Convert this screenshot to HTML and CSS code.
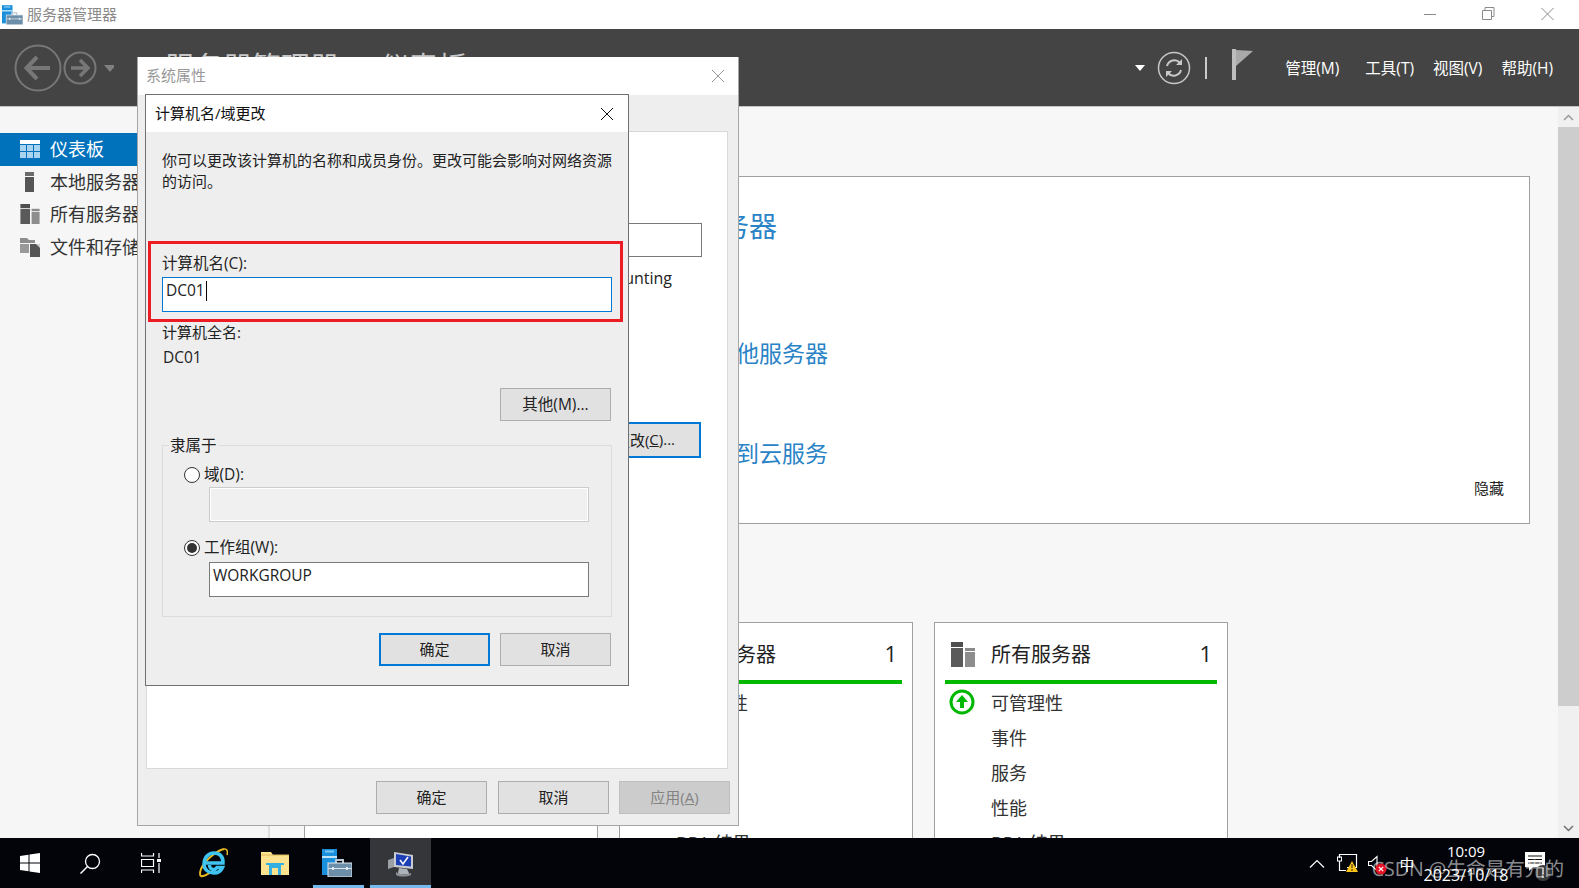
FILE: index.html
```html
<!DOCTYPE html>
<html>
	<head>
		<meta charset="utf-8">
		<title>服务器管理器</title>
		<link rel="stylesheet" href="styles.css">
	</head>
	<body>
		<svg class="defs" width="0" height="0">
			<symbol id="srvmgr" viewBox="0 0 30 28">
				<rect x="0" y="0" width="15" height="26" fill="#1a8fdc"/>
				<rect x="0" y="7" width="15" height="2" fill="#bfe3f8"/>
				<rect x="3" y="1.5" width="9" height="2" fill="#7cc8f2"/>
				<path d="M14 14v-3h7v3" fill="none" stroke="#b9c7d2" stroke-width="2"/>
				<rect x="6" y="14" width="24" height="14" fill="#6c8ea8" stroke="#dfe8ee"/>
				<path d="M6.500 19.500h23" stroke="#dfe8ee"/>
				<rect x="10" y="18" width="2" height="3" fill="#dfe8ee"/>
				<rect x="24" y="18" width="2" height="3" fill="#dfe8ee"/>
			</symbol>
			<symbol id="allsrv" viewBox="0 0 24 25">
				<rect x="0" y="0" width="12" height="5" fill="#4f4f4f"/>
				<rect x="0" y="6" width="12" height="19" fill="#5a5a5a"/>
				<rect x="14" y="6" width="10" height="3" fill="#8a8a8a"/>
				<rect x="14" y="10" width="10" height="15" fill="#8d8d8d"/>
			</symbol>
		</svg>

		<div class="app">
			<!-- 标题栏 -->
			<div class="titlebar">
				<svg class="title-icon" width="21" height="20"><use href="#srvmgr"/></svg>
				<span class="title-text">服务器管理器</span>
				<div class="winctl">
					<svg width="58" height="14" viewBox="0 0 58 14"><path d="M0 7.500h12" stroke="#8a8a8a"/></svg>
					<svg width="59" height="14" viewBox="0 0 59 14"><path d="M.5 3.500h9v9h-9zM3 3V.5h9v9H10" fill="none" stroke="#8a8a8a"/></svg>
					<svg width="13" height="14" viewBox="0 0 13 14"><path d="M.5 1l12 12M12.500 1l-12 12" stroke="#8a8a8a"/></svg>
				</div>
			</div>

			<!-- 工具栏 -->
			<div class="toolbar">
				<svg class="nav-icon" width="100" height="50" viewBox="0 0 100 50">
					<circle cx="24" cy="25" r="22.500" fill="none" stroke="#777" stroke-width="2"/>
					<path d="M36 25H14M23 14L12.500 25 23 36" fill="none" stroke="#777" stroke-width="4"/>
					<circle cx="66" cy="25" r="15.500" fill="none" stroke="#777" stroke-width="2"/>
					<path d="M57 25h16M66 17l8 8-8 8" fill="none" stroke="#777" stroke-width="3.500"/>
					<path d="M90 22h12l-6 7z" fill="#808080"/>
				</svg>
				<span class="crumb">服务器管理器 · 仪表板</span>
				<div class="tools">
					<svg class="caret-down" width="10" height="6" viewBox="0 0 10 6"><path d="M0 0h10L5 6z" fill="#fff"/></svg>
					<svg class="refresh" width="34" height="34" viewBox="0 0 34 34">
						<circle cx="17" cy="17" r="15.500" fill="none" stroke="#c8c8c8" stroke-width="1.500"/>
						<path d="M10 15a7.500 7.500 0 0 1 13-3M24 19a7.500 7.500 0 0 1-13 3" fill="none" stroke="#c8c8c8" stroke-width="2"/>
						<path d="M25 8v6h-6zM9 26v-6h6z" fill="#c8c8c8"/>
					</svg>
					<span class="sep"></span>
					<svg class="flag" width="22" height="31" viewBox="0 0 22 31">
						<path d="M0 0h4v31H0z" fill="#bdbdbd"/>
						<path d="M4 1l17 1L4 17z" fill="#a9a9a9"/>
					</svg>
					<div class="menu">
						<span class="menu-a">管理(M)</span>
						<span class="menu-b">工具(T)</span>
						<span class="menu-c">视图(V)</span>
						<span class="menu-d">帮助(H)</span>
					</div>
				</div>
			</div>

			<!-- 主体 -->
			<div class="main">
				<div class="sidebar">
					<div class="side-item active">
						<svg width="20" height="18" viewBox="0 0 20 18">
							<rect width="20" height="4" fill="#fff"/>
							<path d="M0 5h6v6H0zM7 5h6v6H7zM14 5h6v6h-6zM0 12h6v6H0zM7 12h6v6H7zM14 12h6v6h-6z" fill="#a9d3ee"/>
						</svg>
						<span>仪表板</span>
					</div>
					<div class="side-item">
						<svg width="20" height="20" viewBox="0 0 20 20">
							<rect x="5" y="0" width="9" height="4" fill="#6b6b6b"/>
							<rect x="5" y="5" width="9" height="15" fill="#555"/>
						</svg>
						<span>本地服务器</span>
					</div>
					<div class="side-item">
						<svg width="20" height="20"><use href="#allsrv"/></svg>
						<span>所有服务器</span>
					</div>
					<div class="side-item">
						<svg width="20" height="20" viewBox="0 0 20 20">
							<path d="M0 1h7l2 2h6v3H0z" fill="#8d8d8d"/>
							<path d="M0 7h9v9H0z" fill="#9a9a9a"/>
							<path d="M10 7h10v13H10z" fill="#555"/>
							<path d="M16 7h4v4z" fill="#d0d0d0"/>
						</svg>
						<span>文件和存储服务</span>
					</div>
				</div>

				<div class="content">
					<div class="panel">
						<div class="link first">配置此本地服务器</div>
						<div class="link second">添加角色和功能</div>
						<div class="link">添加要管理的其他服务器</div>
						<div class="link">创建服务器组</div>
						<div class="link">将此服务器连接到云服务</div>
						<div class="hide-link">隐藏</div>
					</div>
					<div class="cards">
						<div class="card"></div>
						<div class="card">
							<div class="card-head">
								<svg class="card-icon" width="24" height="25"><use href="#allsrv"/></svg>
								<span class="card-title">本地服务器</span>
								<span class="card-num">1</span>
							</div>
							<div class="card-bar"></div>
							<div class="card-row">可管理性</div>
							<div class="card-row">事件</div>
							<div class="card-row">服务</div>
							<div class="card-row">性能</div>
							<div class="card-row">BPA 结果</div>
						</div>
						<div class="card">
							<div class="card-head">
								<svg class="card-icon" width="24" height="25"><use href="#allsrv"/></svg>
								<span class="card-title">所有服务器</span>
								<span class="card-num">1</span>
							</div>
							<div class="card-bar"></div>
							<div class="card-row">
								<svg class="ok-icon" width="26" height="26" viewBox="0 0 26 26">
									<circle cx="13" cy="13" r="11" fill="#fff" stroke="#00b800" stroke-width="3"/>
									<path d="M13 6l6 7h-4v6h-4v-6H7z" fill="#00b800"/>
								</svg>
								可管理性
							</div>
							<div class="card-row">事件</div>
							<div class="card-row">服务</div>
							<div class="card-row">性能</div>
							<div class="card-row">BPA 结果</div>
						</div>
					</div>
				</div>

				<div class="scrollbar">
					<div class="sb-btn">
						<svg width="11" height="7" viewBox="0 0 11 7"><path d="M1 6l4.500-4.500L10 6" fill="none" stroke="#9a9a9a" stroke-width="1.500"/></svg>
					</div>
					<div class="sb-thumb"></div>
					<div class="sb-track"></div>
					<div class="sb-btn">
						<svg width="11" height="7" viewBox="0 0 11 7"><path d="M1 1l4.500 4.500L10 1" fill="none" stroke="#707070" stroke-width="1.500"/></svg>
					</div>
				</div>
			</div>

			<!-- 任务栏 -->
			<div class="taskbar">
				<div class="task-btn win">
					<svg width="20" height="20" viewBox="0 0 20 20"><path d="M0 3l8.500-1.200v7.700H0zM9.500 1.600L20 0v9.500H9.500zM0 10.500h8.500v7.700L0 17zM9.500 10.500H20V20L9.500 18.400z" fill="#fff"/></svg>
				</div>
				<div class="task-btn">
					<svg width="21" height="21" viewBox="0 0 21 21"><circle cx="12.500" cy="8.500" r="7" fill="none" stroke="#fff" stroke-width="1.300"/><path d="M7.500 13.500L.5 20.500" stroke="#fff" stroke-width="1.500"/></svg>
				</div>
				<div class="task-btn nudge">
					<svg width="20" height="20" viewBox="0 0 20 20"><path d="M.5 0v3h12V0M.5 6.500h12v7H.5zM.5 20v-3h12v3M18 0v5M18 10v10" fill="none" stroke="#fff" stroke-width="1.200"/><rect x="16" y="6" width="4" height="3" fill="#fff"/></svg>
				</div>
				<div class="task-btn nudge">
					<svg width="30" height="30" viewBox="0 0 30 30">
						<path d="M26 1C21 2 8 10 3 21c-2 5-1 8 2 7 3-.5 6-2.500 9-5" fill="none" stroke="#e8b923" stroke-width="2"/>
						<path d="M26 1c3-.5 4 2 3 6" fill="none" stroke="#e8b923" stroke-width="1.500"/>
						<path d="M7 15h18c.5-7-4-10-9-10C10 5 6 10 6 16c0 6 5 9 10 9 4 0 7-2 8.500-5.500H19c-1 1.500-2 2-3.500 2-2.500 0-4-2-4-4.500" fill="none" stroke="#3fc3f0" stroke-width="3.500"/>
					</svg>
				</div>
				<div class="task-btn nudge">
					<svg width="28" height="24" viewBox="0 0 28 24">
						<path d="M0 1h10l2 3h16v20H0z" fill="#fde28f"/>
						<path d="M0 4h28" stroke="#d9b85c"/>
						<path d="M8 12h12v12h-3v-7h-6v7H8z" fill="#35aee2"/>
						<rect x="5" y="12" width="18" height="2" fill="#35aee2"/>
					</svg>
				</div>
				<div class="task-btn running nudge">
					<svg width="30" height="28"><use href="#srvmgr"/></svg>
				</div>
				<div class="task-btn running current">
					<svg width="28" height="27" viewBox="0 0 28 27">
						<path d="M1 10l6-2v9l-6 2z" fill="#9aa0a5"/>
						<path d="M7 2l19 3v14L7 17z" fill="#c8ccd0"/>
						<path d="M9 4l15 2.500v10L9 15z" fill="#1c3fb5"/>
						<path d="M13 10l3 4 5-7" fill="none" stroke="#fff" stroke-width="1.500"/>
						<path d="M12 18l8 1 2 4c1 2-11 2-11 0z" fill="#aeb3b8"/>
						<path d="M9 22c3 3 12 3 15 1v2c-4 2-12 2-15 0z" fill="#8b9096"/>
					</svg>
				</div>

				<div class="tray">
					<div class="tray-chevron">
						<svg width="16" height="9" viewBox="0 0 16 9"><path d="M1 8.500l7-7 7 7" fill="none" stroke="#fff" stroke-width="1.200"/></svg>
					</div>
					<div class="tray-net">
						<svg width="21" height="18" viewBox="0 0 21 18">
							<path d="M2.500 4V.5h17v13H10M2.500 7v9.500H9" fill="none" stroke="#fff" stroke-width="1.200"/>
							<rect x=".5" y="3" width="4" height="4" fill="none" stroke="#fff"/>
							<path d="M15 7l6 11H9z" fill="#fcc419"/>
							<path d="M15 10v4M15 15v2" stroke="#222"/>
						</svg>
					</div>
					<div class="tray-sound">
						<svg width="22" height="20" viewBox="0 0 22 20">
							<path d="M.5 6.500h3L9 1.500v14l-5.500-5h-3z" fill="none" stroke="#fff" stroke-width="1.100"/>
							<circle cx="13" cy="14" r="5.500" fill="#e81123"/>
							<path d="M10.800 11.800l4.400 4.400M15.200 11.800l-4.400 4.400" stroke="#fff" stroke-width="1.200"/>
						</svg>
					</div>
					<div class="tray-ime">中</div>
					<div class="clock">
						<span>10:09</span>
						<span>2023/10/18</span>
					</div>
					<div class="tray-note">
						<svg width="26" height="30" viewBox="0 0 26 30">
							<path d="M0 0h20v15H8l-4 4v-4H0z" fill="#fff"/>
							<path d="M3 4h14M3 7.500h14M3 11h14" stroke="#111"/>
							<circle cx="18" cy="21" r="8" fill="#3c3c3c"/>
							<path d="M18 16v6M18 24v2" stroke="#ddd" stroke-width="1.500"/>
						</svg>
					</div>
				</div>
				<div class="watermark">CSDN @生命是有光的</div>
			</div>
		</div>

		<!-- 系统属性 -->
		<div class="dialog outer">
			<div class="dlg-title">
				<span>系统属性</span>
				<svg width="14" height="14" viewBox="0 0 14 14"><path d="M1 1l12 12M13 1L1 13" stroke="#999"/></svg>
			</div>
			<div class="outer-body">
				<div class="tab-panel">
					<div class="bg-input"></div>
					<div class="bg-text">Accounting</div>
					<div class="btn focus bg-btn">更改(<u>C</u>)...</div>
				</div>
				<div class="btn-row outer-btns">
					<div class="btn">确定</div>
					<div class="btn">取消</div>
					<div class="btn disabled">应用(<u>A</u>)</div>
				</div>
			</div>
		</div>

		<!-- 计算机名/域更改 -->
		<div class="dialog inner">
			<div class="dlg-title">
				<span>计算机名/域更改</span>
				<svg width="14" height="14" viewBox="0 0 14 14"><path d="M1 1l12 12M13 1L1 13" stroke="#111"/></svg>
			</div>
			<div class="inner-body">
				<div class="desc">
					<p class="desc-first">你可以更改该计算机的名称和成员身份。更改可能会影响对网络资源</p>
					<p>的访问。</p>
				</div>
				<div class="label name-label">计算机名(C):</div>
				<div class="field active-field">DC01<i class="cursor"></i></div>
				<div class="label full-label">计算机全名:</div>
				<div class="label full-value">DC01</div>
				<div class="other-row"><div class="btn">其他(M)...</div></div>
				<div class="group">
					<div class="group-title">隶属于</div>
					<div class="radio-row first-radio"><i class="radio"></i>域(D):</div>
					<div class="field off indent"></div>
					<div class="radio-row second-radio"><i class="radio on"></i>工作组(W):</div>
					<div class="field plain indent">WORKGROUP</div>
				</div>
				<div class="btn-row inner-btns">
					<div class="btn focus">确定</div>
					<div class="btn">取消</div>
				</div>
			</div>
		</div>

		<!-- 红框标注 -->
		<div class="redbox"></div>
	</body>
</html>
```

FILE: styles.css
```css
* {
	margin: 0;
	padding: 0;
	box-sizing: border-box;
}
body {
	font-family: "Open Sans", "Noto Sans CJK SC", sans-serif;
	width: 1579px;
	height: 888px;
	overflow: hidden;
	position: relative;
	color: #222;
	background: #fff;
}
.defs {
	position: absolute;
}
.app {
	height: 888px;
	display: flex;
	flex-direction: column;
}

/* 标题栏 */
.titlebar {
	height: 29px;
	background: #fff;
	display: flex;
	align-items: center;
	padding-left: 2px;
}
.title-icon {
	margin-right: 4px;
}
.title-text {
	font-size: 15px;
	color: #8a8a8a;
	padding-bottom: 2px;
}
.winctl {
	margin-left: auto;
	padding-right: 25px;
	display: flex;
	padding-bottom: 1px;
}

/* 工具栏 */
.toolbar {
	height: 78px;
	background: #444;
	border-bottom: 1px solid #c4c4c4;
	display: flex;
	align-items: center;
	padding-left: 14px;
}
.crumb {
	font-size: 29px;
	color: #c8c8c8;
	margin-left: 51px;
	padding-bottom: 5px;
	word-spacing: 9px;
	white-space: nowrap;
}
.tools {
	margin-left: auto;
	display: flex;
	align-items: center;
}
.caret-down {
	margin-right: 12px;
}
.sep {
	width: 2px;
	height: 22px;
	background: #ccc;
	margin: 0 25px 0 14px;
}
.flag {
	margin-top: -6px;
}
.menu {
	display: flex;
	color: #fff;
	font-size: 15.500px;
	margin-left: 31px;
	padding-right: 26px;
	padding-bottom: 1px;
}
.menu-b {
	margin-left: 26px;
}
.menu-c {
	margin-left: 19px;
}
.menu-d {
	margin-left: 19px;
}

/* 主体 */
.main {
	flex: 1;
	display: flex;
	min-height: 0;
	background: #f7f7f7;
}
.sidebar {
	width: 270px;
	flex-shrink: 0;
	padding-top: 26px;
	background: #f6f6f6;
	border-right: 2px solid #dedede;
}
.side-item {
	height: 32.500px;
	display: flex;
	align-items: center;
	gap: 10px;
	padding-left: 20px;
	font-size: 18px;
	color: #333;
}
.side-item span {
	padding-bottom: 2px;
}
.side-item.active {
	background: #0072bc;
	color: #fff;
}
.content {
	flex: 1;
	min-width: 0;
	overflow: hidden;
	padding: 69px 28px 0 34px;
}
.panel {
	height: 348px;
	background: #fff;
	border: 1px solid #a0a0a0;
	padding: 29px 0 0 270px;
}
.link {
	font-size: 23px;
	line-height: 50px;
	color: #2a83c6;
}
.link.first {
	font-size: 28px;
	line-height: 40px;
	margin-left: -22px;
}
.link.second {
	margin-top: 18px;
	margin-bottom: 14px;
}
.hide-link {
	font-size: 15px;
	line-height: 20px;
	text-align: right;
	padding-right: 25px;
}
.cards {
	display: flex;
	gap: 21px;
	margin-top: 98px;
}
.card {
	width: 294px;
	height: 260px;
	background: #fff;
	border: 1px solid #a0a0a0;
	flex-shrink: 0;
}
.card-head {
	height: 57px;
	display: flex;
	align-items: center;
	position: relative;
	padding-left: 16px;
	padding-top: 4px;
}
.card-icon {
	margin-top: 2px;
}
.card-title {
	font-size: 20px;
	color: #222;
	margin-left: 16px;
}
.card-num {
	margin-left: auto;
	font-size: 22px;
	padding-right: 15px;
	padding-bottom: 2px;
}
.card-bar {
	height: 4px;
	background: #00b800;
	margin: 0 10px 1px;
}
.card-row {
	height: 35px;
	line-height: 35px;
	font-size: 18px;
	padding-left: 56px;
	color: #333;
	position: relative;
	top: 1px;
}
.ok-icon {
	position: absolute;
	left: 14px;
	top: 3px;
}
.scrollbar {
	width: 21px;
	flex-shrink: 0;
	display: flex;
	flex-direction: column;
	background: #f0f0f0;
}
.sb-btn {
	height: 20px;
	display: flex;
	align-items: center;
	justify-content: center;
}
.sb-thumb {
	height: 579px;
	background: #cdcdcd;
}
.sb-track {
	flex: 1;
}

/* 任务栏 */
.taskbar {
	height: 50px;
	flex-shrink: 0;
	background: #02040a;
	display: flex;
	gap: 1px;
	position: relative;
}
.task-btn {
	width: 61px;
	display: flex;
	align-items: center;
	justify-content: center;
	position: relative;
}
.task-btn.win {
	width: 59px;
	padding-left: 1px;
}
.task-btn.nudge {
	padding-right: 3px;
}
.task-btn.running::after {
	content: "";
	position: absolute;
	left: 5px;
	right: 5px;
	bottom: 0;
	height: 3px;
	background: #76b9ed;
}
.task-btn.current {
	background: #343639;
}
.task-btn.current::after {
	left: 0;
	right: 0;
}
.tray {
	margin-left: auto;
	display: flex;
	align-items: center;
	color: #fff;
	padding-right: 11px;
	border-right: 0;
}
.tray-chevron {
	width: 34px;
	display: flex;
	justify-content: center;
}
.tray-net {
	width: 26px;
	display: flex;
	justify-content: center;
}
.tray-sound {
	width: 30px;
	padding-left: 8px;
	padding-top: 4px;
	display: flex;
}
.tray-ime {
	width: 34px;
	text-align: center;
	font-size: 15px;
}
.clock {
	width: 84px;
	display: flex;
	flex-direction: column;
	align-items: center;
	font-size: 15px;
	line-height: 24px;
	padding-bottom: 1px;
}
.clock span + span {
	font-size: 16px;
}
.tray-note {
	width: 60px;
	display: flex;
	justify-content: center;
	padding-top: 8px;
}
.watermark {
	position: absolute;
	right: 15px;
	top: 16px;
	font-size: 19.600px;
	line-height: 30px;
	text-rendering: geometricPrecision;
	color: rgba(255, 255, 255, .55);
	white-space: nowrap;
}

/* 对话框 */
.dialog {
	position: absolute;
	font-size: 15.500px;
}
.dlg-title {
	background: #fff;
	display: flex;
	align-items: center;
	justify-content: space-between;
}
.dlg-title span {
	padding-bottom: 2px;
}
.outer {
	left: 137px;
	top: 57px;
	width: 602px;
	height: 769px;
	background: #eee;
	border: 1px solid #a6a6a6;
	border-top: 0;
}
.outer .dlg-title {
	height: 38px;
	padding: 0 13px 0 8px;
	color: #999;
	font-size: 15px;
}
.outer .dlg-title span {
	padding-bottom: 4px;
}
.outer-body {
	padding: 36px 10px 0 8px;
}
.tab-panel {
	height: 638px;
	background: #fff;
	border: 1px solid #d9d9d9;
	padding: 91px 25px 0 0;
	display: flex;
	flex-direction: column;
	align-items: flex-end;
}
.bg-input {
	width: 300px;
	height: 34px;
	border: 1px solid #7a7a7a;
}
.bg-text {
	line-height: 20px;
	margin-top: 11px;
	margin-right: 30px;
	font-size: 16px;
}
.btn {
	width: 111px;
	height: 33px;
	background: #e1e1e1;
	border: 1px solid #adadad;
	display: flex;
	align-items: center;
	justify-content: center;
	font-size: 15px;
	flex-shrink: 0;
	padding-bottom: 2px;
}
.btn.focus {
	border: 2px solid #0078d7;
}
.btn.bg-btn {
	margin-top: 134px;
	margin-right: 1px;
	height: 36px;
	width: 110px;
	padding-right: 2px;
}
.btn.disabled {
	background: #ccc;
	border-color: #bfbfbf;
	color: #838383;
}
.btn-row {
	display: flex;
}
.outer-btns {
	margin: 12px -2px 0 0;
	justify-content: flex-end;
	gap: 11px;
}
.outer-btns .btn:last-child {
	margin-left: -1px;
}
.inner {
	left: 145px;
	top: 94px;
	width: 484px;
	height: 592px;
	background: #eee;
	border: 1px solid #707070;
}
.inner .dlg-title {
	height: 37px;
	padding: 0 14px 0 9px;
	font-size: 15px;
	color: #111;
}
.inner-body {
	padding: 0 16px;
}
.desc {
	padding-top: 18px;
	line-height: 21px;
	font-size: 15px;
}
.desc-first {
	width: 450px;
	text-align: justify;
	text-align-last: justify;
}
.label {
	line-height: 20px;
}
.name-label {
	margin-top: 61px;
}
.field {
	height: 35px;
	background: #fff;
	padding: 2px 3px 0;
	line-height: 21px;
}
.active-field {
	margin-top: 4px;
	border: 1px solid #0078d7;
	display: flex;
	align-items: flex-start;
	padding-left: 3px;
}
.cursor {
	width: 1px;
	height: 20px;
	background: #000;
	margin-top: 1px;
	margin-left: 1px;
}
.full-label {
	margin-top: 10px;
	font-size: 15px;
}
.full-value {
	margin-top: 5px;
	padding-left: 1px;
}
.other-row {
	margin-top: 21px;
	display: flex;
	justify-content: flex-end;
	padding-right: 1px;
}
.other-row .btn {
	font-size: 15.500px;
}
.group {
	margin-top: 24px;
	height: 172px;
	border: 1px solid #dcdcdc;
}
.group-title {
	margin: -11px 0 0 6px;
	padding: 0 1px;
	background: #eee;
	width: fit-content;
	line-height: 20px;
}
.radio-row {
	display: flex;
	align-items: center;
	line-height: 21px;
	padding-left: 21px;
	gap: 4px;
}
.first-radio {
	margin-top: 9px;
}
.second-radio {
	margin-top: 15px;
}
.radio {
	width: 16px;
	height: 16px;
	border-radius: 50%;
	background: #fff;
	border: 1px solid #333;
	display: flex;
	align-items: center;
	justify-content: center;
}
.radio.on::before {
	content: "";
	width: 10px;
	height: 10px;
	border-radius: 50%;
	background: #333;
}
.indent {
	margin-left: 46px;
	margin-right: 22px;
}
.field.off {
	margin-top: 2px;
	background: #f0f0f0;
	border: 1px solid #ccc;
	box-shadow: inset 0 0 0 1px #fff;
}
.field.plain {
	margin-top: 4px;
	border: 1px solid #7a7a7a;
}
.inner-btns {
	margin-top: 16px;
	justify-content: flex-end;
	gap: 10px;
	padding-right: 1px;
}
.redbox {
	position: absolute;
	left: 148px;
	top: 241px;
	width: 475px;
	height: 81px;
	border: 3px solid #ed1c24;
}
```
